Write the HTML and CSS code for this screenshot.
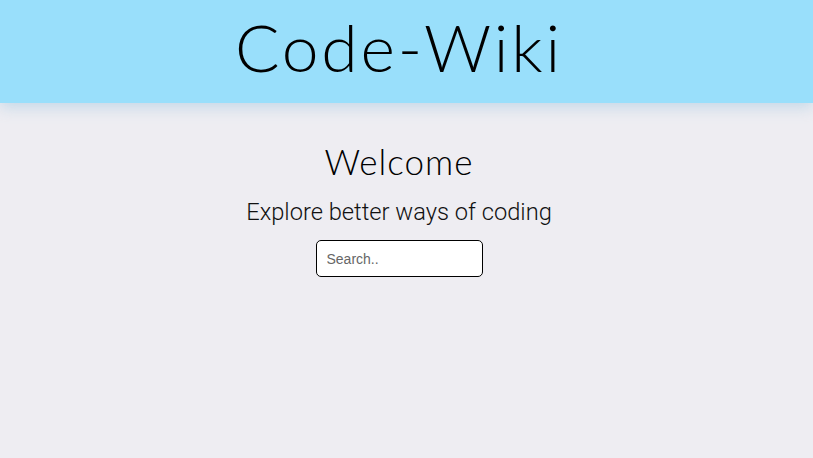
FILE: index.html
```html
<!DOCTYPE html>
<html>
<head>
<meta charset="utf-8">
<link rel="stylesheet" href="styles.css">
</head>
<body>
<header class="site-header">
  <h1 class="logo">Code-Wiki</h1>
</header>
<main class="hero">
  <h2 class="welcome">Welcome</h2>
  <p class="tagline">Explore better ways of coding</p>
  <input class="search" type="text" placeholder="Search..">
</main>
</body>
</html>
```
FILE: styles.css
```css
html, body {
  margin: 0;
  padding: 0;
}
body {
  background: #eeedf2;
  height: 458px;
  overflow: hidden;
}
.site-header {
  box-sizing: border-box;
  height: 103px;
  background: #99dffb;
  box-shadow: 0 4px 14px rgba(140, 190, 220, 0.45);
  display: flex;
  justify-content: center;
  align-items: flex-start;
  padding: 14px 15px 0 0;
  position: relative;
  z-index: 1;
}
.logo {
  margin: 0;
  font-family: "Lato", sans-serif;
  font-weight: 300;
  font-size: 66px;
  letter-spacing: 2.8px;
  color: #000;
  line-height: 66px;
}
.hero {
  display: flex;
  flex-direction: column;
  align-items: center;
  padding: 37px 15px 0 0;
}
.welcome {
  margin: 0;
  font-family: "Lato", sans-serif;
  font-weight: 300;
  font-size: 35px;
  letter-spacing: 1px;
  line-height: 42px;
  color: #000;
}
.tagline {
  margin: 16px 0 0;
  font-family: "Roboto", sans-serif;
  font-weight: 300;
  font-size: 23.7px;
  line-height: 28px;
  color: #111;
}
.search {
  margin-top: 14px;
  box-sizing: border-box;
  width: 167px;
  height: 37px;
  border: 1px solid #000;
  border-radius: 5px;
  background: #fff;
  padding: 0 10px;
  font-family: "Liberation Sans", Arial, sans-serif;
  font-size: 14px;
  outline: none;
}
.search::placeholder {
  color: #666;
}
```
